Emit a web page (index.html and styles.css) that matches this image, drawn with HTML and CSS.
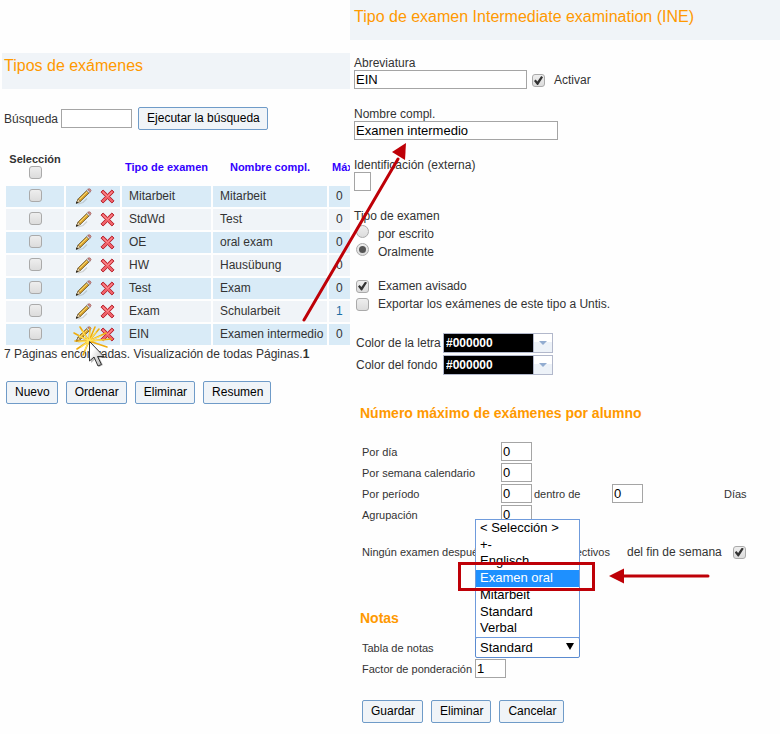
FILE: index.html
```html
<!DOCTYPE html>
<html lang="es">
<head>
<meta charset="utf-8">
<title>Tipos de exámenes</title>
<link rel="stylesheet" href="styles.css">
</head>
<body>
<svg class="sprite" aria-hidden="true">
  <symbol id="pencil" viewBox="0 0 17 17">
    <path d="M3 16 8 14.500 12 10.500" fill="none" stroke="#8d8d88" stroke-opacity=".35" stroke-width="1.2"/>
    <path d="M1.500 15 3.200 10.900 11.800 2.500 14.200 4.800 5.400 13.400Z" fill="#dda52d" stroke="#5e471c" stroke-width=".8"/>
    <path d="M4.300 11.500 12.400 3.500" stroke="#ffe27a" stroke-width="1"/>
    <path d="M1.500 15 3.200 10.900 5.400 13.400Z" fill="#ecd9b4" stroke="#5e471c" stroke-width=".5"/>
    <path d="M.8 15.800 1.700 13.500 3.200 14.900Z" fill="#111"/>
    <path d="M11.500 2.700 12.800 1.400 15.300 3.800 14 5.100Z" fill="#ddd" stroke="#777" stroke-width=".6"/>
    <path d="M12.800 1.400Q14 .2 15.400 1.300 16.700 2.500 15.300 3.800Z" fill="#e79a94" stroke="#8f4a48" stroke-width=".7"/>
  </symbol>
  <symbol id="cross" viewBox="0 0 15 15">
    <path d="M3.100 1 7.500 5.300 11.900 1 14 3.100 9.700 7.500 14 11.900 11.900 14 7.500 9.700 3.100 14 1 11.900 5.300 7.500 1 3.100Z" fill="#f0626a" stroke="#b5202b" stroke-width="1" stroke-linejoin="round"/>
    <path d="M2.900 3.200 7.500 7.500 12.100 3.200" fill="none" stroke="#ff9a9c" stroke-width=".8"/>
  </symbol>
</svg>

<main class="page">
  <section class="list-panel">
    <h1 class="band">Tipos de exámenes</h1>
    <div class="search">
      <label for="q">Búsqueda</label>
      <input class="field" id="q" type="text">
      <button class="btn" type="button">Ejecutar la búsqueda</button>
    </div>
    <table class="types">
      <colgroup><col class="c-sel"><col class="c-act"><col class="c-type"><col class="c-name"><col class="c-max"></colgroup>
      <thead>
        <tr>
          <th class="sel"><label for="all">Selección</label><input type="checkbox" id="all"></th>
          <th></th>
          <th><a href="#">Tipo de examen</a></th>
          <th><a href="#">Nombre compl.</a></th>
          <th class="max"><a href="#">Máx.</a></th>
        </tr>
      </thead>
      <tbody>
        <tr><td class="pick"><input type="checkbox" aria-label="Mitarbeit"></td><td class="acts"><a href="#" aria-label="Editar"><svg class="pencil"><use href="#pencil"/></svg></a><a href="#" aria-label="Eliminar"><svg class="cross"><use href="#cross"/></svg></a></td><td>Mitarbeit</td><td>Mitarbeit</td><td>0</td></tr>
        <tr><td class="pick"><input type="checkbox" aria-label="StdWd"></td><td class="acts"><a href="#" aria-label="Editar"><svg class="pencil"><use href="#pencil"/></svg></a><a href="#" aria-label="Eliminar"><svg class="cross"><use href="#cross"/></svg></a></td><td>StdWd</td><td>Test</td><td>0</td></tr>
        <tr><td class="pick"><input type="checkbox" aria-label="OE"></td><td class="acts"><a href="#" aria-label="Editar"><svg class="pencil"><use href="#pencil"/></svg></a><a href="#" aria-label="Eliminar"><svg class="cross"><use href="#cross"/></svg></a></td><td>OE</td><td>oral exam</td><td>0</td></tr>
        <tr><td class="pick"><input type="checkbox" aria-label="HW"></td><td class="acts"><a href="#" aria-label="Editar"><svg class="pencil"><use href="#pencil"/></svg></a><a href="#" aria-label="Eliminar"><svg class="cross"><use href="#cross"/></svg></a></td><td>HW</td><td>Hausübung</td><td>0</td></tr>
        <tr><td class="pick"><input type="checkbox" aria-label="Test"></td><td class="acts"><a href="#" aria-label="Editar"><svg class="pencil"><use href="#pencil"/></svg></a><a href="#" aria-label="Eliminar"><svg class="cross"><use href="#cross"/></svg></a></td><td>Test</td><td>Exam</td><td>0</td></tr>
        <tr><td class="pick"><input type="checkbox" aria-label="Exam"></td><td class="acts"><a href="#" aria-label="Editar"><svg class="pencil"><use href="#pencil"/></svg></a><a href="#" aria-label="Eliminar"><svg class="cross"><use href="#cross"/></svg></a></td><td>Exam</td><td>Schularbeit</td><td><a class="count" href="#">1</a></td></tr>
        <tr><td class="pick"><input type="checkbox" aria-label="EIN"></td><td class="acts"><a href="#" aria-label="Editar"><svg class="pencil"><use href="#pencil"/></svg></a><a href="#" aria-label="Eliminar"><svg class="cross"><use href="#cross"/></svg></a></td><td>EIN</td><td>Examen intermedio</td><td>0</td></tr>
      </tbody>
    </table>
    <p class="pager">7 Páginas encontradas. Visualización de todas Páginas.<b>1</b></p>
    <div class="buttons">
      <button class="btn" type="button">Nuevo</button>
      <button class="btn" type="button">Ordenar</button>
      <button class="btn" type="button">Eliminar</button>
      <button class="btn" type="button">Resumen</button>
    </div>
  </section>

  <form class="edit-panel">
    <h1 class="band">Tipo de examen Intermediate examination (INE)</h1>
    <div class="basics">
      <div class="group">
        <label for="abbr">Abreviatura</label>
        <div class="line">
          <input class="field abbr" id="abbr" type="text" value="EIN">
          <input type="checkbox" id="active" checked><label for="active">Activar</label>
        </div>
      </div>
      <div class="group">
        <label for="full">Nombre compl.</label>
        <input class="field full" id="full" type="text" value="Examen intermedio">
      </div>
      <div class="group">
        <label for="ext">Identificación (externa)</label>
        <input class="field ext" id="ext" type="text">
      </div>
      <fieldset class="group">
        <legend>Tipo de examen</legend>
        <div class="choice"><input type="radio" name="kind" id="written"><label for="written">por escrito</label></div>
        <div class="choice"><input type="radio" name="kind" id="oral" checked><label for="oral">Oralmente</label></div>
      </fieldset>
      <div class="group">
        <div class="choice"><input type="checkbox" id="ann" checked><label for="ann">Examen avisado</label></div>
        <div class="choice"><input type="checkbox" id="exp"><label for="exp">Exportar los exámenes de este tipo a Untis.</label></div>
      </div>
      <div class="group colors">
        <div class="color-row"><label for="fg">Color de la letra</label><span class="combo"><input id="fg" type="text" value="#000000"><button type="button" aria-label="Elegir color de la letra"></button></span></div>
        <div class="color-row"><label for="bg">Color del fondo</label><span class="combo"><input id="bg" type="text" value="#000000"><button type="button" aria-label="Elegir color del fondo"></button></span></div>
      </div>
    </div>

    <h2>Número máximo de exámenes por alumno</h2>
    <div class="limits">
      <div class="limit"><label for="day">Por día</label><input class="field num" id="day" type="text" value="0"></div>
      <div class="limit"><label for="week">Por semana calendario</label><input class="field num" id="week" type="text" value="0"></div>
      <div class="limit"><label for="per">Por período</label><input class="field num" id="per" type="text" value="0"><label class="within" for="days">dentro de</label><input class="field num" id="days" type="text" value="0"><span class="unit">Días</span></div>
      <div class="limit"><label for="grp">Agrupación</label><input class="field num" id="grp" type="text" value="0"></div>
    </div>
    <div class="free">
      <div class="free-text"><span>Ningún examen después</span><span>lectivos</span></div>
      <label for="weekend">del fin de semana</label>
      <input type="checkbox" id="weekend" checked>
    </div>

    <h2>Notas</h2>
    <div class="grades">
      <div class="grade">
        <label for="scheme">Tabla de notas</label>
        <div class="dropdown">
          <select id="scheme">
            <option>&lt; Selección &gt;</option><option>+-</option><option>Englisch</option><option>Examen oral</option><option>Mitarbeit</option><option selected>Standard</option><option>Verbal</option>
          </select>
          <ul class="menu">
            <li>&lt; Selección &gt;</li><li>+-</li><li>Englisch</li><li class="current">Examen oral</li><li>Mitarbeit</li><li>Standard</li><li>Verbal</li>
          </ul>
          <div class="mark"></div>
          <svg class="pointer" viewBox="0 0 102 16" aria-hidden="true"><path d="M12 8H99" stroke="#be0007" stroke-width="3" stroke-linecap="round"/><path d="M0 8 15 .5V15.5Z" fill="#be0007"/></svg>
        </div>
      </div>
      <div class="grade"><label for="factor">Factor de ponderación</label><input class="field num" id="factor" type="text" value="1"></div>
    </div>
    <div class="buttons">
      <button class="btn" type="button">Guardar</button>
      <button class="btn" type="button">Eliminar</button>
      <button class="btn" type="button">Cancelar</button>
    </div>
  </form>

  <svg class="notes" viewBox="0 0 780 734" aria-hidden="true">
    <defs>
      <linearGradient id="steel" x1="0" y1="0" x2="1" y2="1"><stop offset=".3" stop-color="#fff"/><stop offset="1" stop-color="#aaa"/></linearGradient>
    </defs>
    <path d="M304 320 398 159" stroke="#be0007" stroke-width="3" stroke-linecap="round"/>
    <path d="M406 143 405 160 392 152Z" fill="#be0007"/>
    <g stroke-linecap="round">
      <path d="M89 341 80 327M89 341 90 328M89 341 99 329M89 341 74 333M89 341 106 333M89 341 75 341M89 341 111 339M89 341 77 349M89 341 83 355M89 341 107 347M89 341 91 352M89 341 95 327" stroke="#efad10" stroke-width="1.600"/>
      <path d="M89 341 82 331M89 341 90 332M89 341 96 332M89 341 79 336M89 341 101 336M89 341 79 342M89 341 104 340M89 341 81 347M89 341 85 350" stroke="#ffe45c" stroke-width="1.200"/>
    </g>
    <path d="M91 344 91 363 95.500 359 99 367 103 365 99.500 358 106 358Z" fill="#777" opacity=".5"/>
    <path d="M89.500 341.500V361L94 357 98 366 101.500 364.500 97.500 356.500H104Z" fill="url(#steel)" stroke="#333" stroke-linejoin="round"/>
  </svg>
</main>
</body>
</html>
```
FILE: styles.css
```css
* { box-sizing: border-box; }

body {
  margin: 0;
  background: #fefefe;
  color: #333;
  font: 12px/14px "Liberation Sans", Arial, sans-serif;
}

h1, h2, p, ul, fieldset, legend { margin: 0; padding: 0; border: 0; }
a { text-decoration: none; color: #30f; }
.sprite { position: absolute; width: 0; height: 0; }

.page {
  position: relative;
  display: grid;
  grid-template-columns: minmax(0, 35fr) minmax(0, 43fr);
}

.band {
  background: #f0f4f8;
  color: #f90;
  font-size: 16px;
  font-weight: normal;
  line-height: 18px;
}

/* shared controls */
.field {
  height: 19px;
  margin: 0;
  padding: 0 1px;
  border: 1px solid #a5a5a5;
  background: #fff;
  color: #000;
  font: 13px "Liberation Sans", Arial, sans-serif;
}

.btn {
  height: 23px;
  padding: 0 7px 1px 8px;
  border: 1px solid #6f9bc8;
  border-radius: 2px;
  background: #f0f4f8;
  color: #000;
  font: 12px "Liberation Sans", Arial, sans-serif;
}

.buttons { display: flex; gap: 8px; }

input[type="checkbox"], input[type="radio"] {
  appearance: none;
  flex: none;
  position: relative;
  width: 13px;
  height: 13px;
  margin: 0;
  border: 1px solid #aaa;
  border-radius: 3px;
  background: linear-gradient(#eee, #dcdcdc);
}

input[type="radio"] { border-radius: 50%; }

input[type="checkbox"]:checked::before {
  content: "";
  position: absolute;
  inset: 1px;
  background: #333;
  clip-path: polygon(0 55%, 18% 40%, 38% 60%, 80% 0, 100% 15%, 45% 100%, 35% 100%);
}

input[type="radio"]:checked::before {
  content: "";
  position: absolute;
  inset: 2px;
  border-radius: 50%;
  background: #555;
}

/* list */
.list-panel {
  overflow: hidden;
  padding: 53px 0 0 2px;
}

.list-panel .band { padding: 4px 2px 14px; }

.search {
  display: flex;
  align-items: center;
  margin: 18px 0 0 2px;
}

.search .field { width: 71px; margin: 0 6px 0 3px; }

.types {
  width: 388px;
  margin: 18px 0 0 2px;
  table-layout: fixed;
  border-spacing: 2px;
}

.c-sel { width: 58px; }
.c-act { width: 54px; }
.c-type { width: 89px; }
.c-name { width: 114px; }

.types th {
  height: 34px;
  padding: 0;
  font-size: 11px;
  line-height: 14px;
  white-space: nowrap;
}

.types .max { padding-left: 3px; text-align: left; }
.types .sel { padding-bottom: 4px; }
.sel label { display: block; }
.sel input { display: block; margin: 0 auto; }

.types td {
  height: 21px;
  padding: 0 7px 2px;
  background: #f0f4f8;
  white-space: nowrap;
}

.types tbody tr:nth-child(odd) td { background: #d9ebf7; }
.types .pick { padding: 0 0 2px; }
.pick input { display: block; margin: 0 auto; }
.types .acts { padding: 0 5px 0 9px; font-size: 0; }
.acts a { display: inline-block; vertical-align: middle; }
.acts svg { display: block; }
.pencil { width: 17px; height: 17px; }
.cross { width: 15px; height: 15px; margin-left: 8px; }
.count { color: #1c6ea4; }

.pager { margin-left: 2px; }
.list-panel .buttons { margin: 20px 0 0 4px; }

/* edit form */
.edit-panel .band { padding: 8px 4px 14px; }
.basics { padding: 16px 4px 0; }
.group { margin-bottom: 18px; }
.group > label, .group > legend { display: block; }
.group > .field { display: block; }
.line { display: flex; align-items: center; }
.abbr { width: 173px; }
.full { width: 204px; }
.ext { width: 17px; }
.line input[type="checkbox"] { margin: 2px 9px 0 5px; }

.choice {
  display: flex;
  align-items: center;
  gap: 9px;
  height: 18px;
  padding-left: 2px;
}

fieldset .choice { align-items: flex-start; }
fieldset .choice label { padding-top: 4px; }
fieldset .choice input { margin-top: 2px; }

.colors { margin-top: 19px; padding-left: 2px; }

.color-row {
  display: flex;
  align-items: center;
  height: 22px;
}

.color-row label { width: 87px; }

.combo {
  display: flex;
  width: 110px;
  height: 20px;
  border: 1px solid #b2b8cb;
}

.combo input {
  flex: 1;
  min-width: 0;
  padding: 0 2px;
  border: 0;
  background: #000;
  color: #fff;
  font: bold 12px "Liberation Sans", Arial, sans-serif;
}

.combo button {
  display: grid;
  place-items: center;
  width: 19px;
  padding: 0;
  border: 0;
  border-left: 1px solid #b2b8cb;
  background: linear-gradient(#fff 45%, #edf2f8 45%);
}

.combo button::before {
  content: "";
  border: 4px solid transparent;
  border-top-color: #92acd0;
  border-bottom: 0;
}

h2 {
  padding-left: 10px;
  color: #f90;
  font-size: 14px;
  line-height: 18px;
}

.edit-panel h2 { margin-top: 28px; }

.limits, .free, .grades { padding-left: 12px; font-size: 11px; }
.limits { margin-top: 19px; }
.limit, .grade { display: flex; align-items: center; height: 21px; }
.limit > label:first-child { width: 139px; }
.num { width: 31px; }
.limit .within { width: 80px; padding-left: 2px; }
.unit { margin-left: 81px; }

.free {
  display: flex;
  align-items: center;
  height: 20px;
  margin-top: 17px;
}

.free-text {
  display: flex;
  justify-content: space-between;
  width: 265px;
  padding-right: 17px;
}

.free label { font-size: 12px; }
.free input[type="checkbox"] { margin-left: 11px; }

.edit-panel .free + h2 { margin-top: 47px; }
.grades { margin-top: 10px; }
.grade > label { width: 113px; white-space: nowrap; }
.dropdown { position: relative; width: 105px; }

.dropdown select {
  display: block;
  appearance: none;
  width: 100%;
  height: 21px;
  margin: 0;
  padding: 0 4px;
  border: 1px solid #5b8bd0;
  border-radius: 2px;
  background: #fff;
  color: #000;
  font: 13px "Liberation Sans", Arial, sans-serif;
}

.dropdown::after {
  content: "";
  position: absolute;
  right: 6px;
  top: 6px;
  border: 4px solid transparent;
  border-top: 7px solid #000;
  border-bottom: 0;
}

.menu {
  position: absolute;
  bottom: calc(100% - 1px);
  left: 0;
  display: grid;
  grid-auto-rows: 1fr;
  width: 100%;
  height: 119px;
  border: 1px solid #6f9bdc;
  background: #fff;
  color: #000;
  font-size: 13px;
  line-height: 16px;
  list-style: none;
}

.menu li { padding-left: 4px; }
.menu .current { background: #1e90ff; color: #fff; }

.mark {
  position: absolute;
  left: -17px;
  top: -75px;
  width: 137px;
  height: 29px;
  border: 3px solid #be0007;
}

.pointer {
  position: absolute;
  left: 134px;
  top: -69px;
  width: 102px;
  height: 16px;
}

.edit-panel > .buttons { margin: 21px 0 0 12px; padding-bottom: 10px; }

/* callouts drawn over the two panels */
.notes {
  position: absolute;
  top: 0;
  left: 0;
  width: 780px;
  height: 734px;
  pointer-events: none;
}
```
